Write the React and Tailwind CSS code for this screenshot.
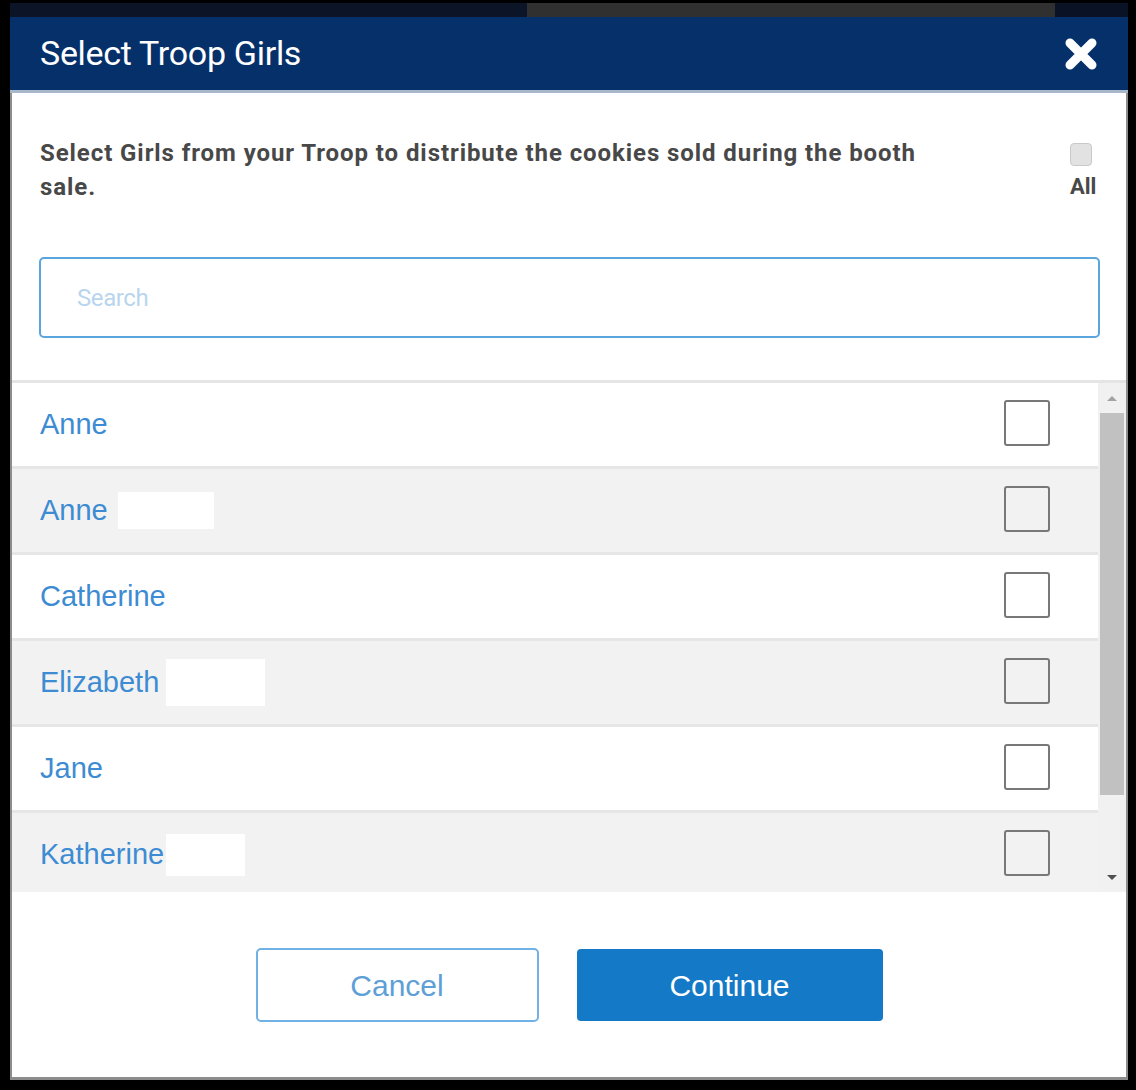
import React from 'react';

const girls = [
  { name: 'Anne' },
  { name: 'Anne', mask: 'ml-[10px] w-[96px] h-[37px]' },
  { name: 'Catherine' },
  { name: 'Elizabeth', mask: 'ml-[7px] w-[99px] h-[47px]' },
  { name: 'Jane' },
  { name: 'Katherine', mask: 'ml-[2px] w-[79px] h-[42px]' },
];

const CloseIcon = () => (
  <svg width="34" height="34" viewBox="0 0 34 34">
    <path d="M6 6 L28 28 M28 6 L6 28" stroke="#fff" strokeWidth="9" strokeLinecap="round" />
  </svg>
);

const App = () => {
  return (
    <div className="w-[1136px] h-[1090px] bg-black flex flex-col pt-[3px] pl-[10px] pr-[8px] pb-[10px]">
      {/* page behind the modal, mostly covered */}
      <div className="h-[14px] flex">
        <div className="w-[517px] bg-[#0b1527]" />
        <div className="w-[528px] bg-[#303030]" />
        <div className="flex-1 bg-[#0a1326]" />
      </div>

      {/* header */}
      <div className="h-[76px] bg-[#06306a] border-b-[3px] border-[#a8b7ca] flex items-center justify-between pl-[30px] pr-[30px]">
        <h1 className="text-white text-[34px] font-['Roboto',sans-serif] tracking-[-0.3px]">Select Troop Girls</h1>
        <button className="flex items-center">
          <CloseIcon />
        </button>
      </div>

      {/* body */}
      <div className="flex-1 bg-white border-l-2 border-r-2 border-b-[3px] border-[#8c8c8c] flex flex-col">
        <div className="flex justify-between pt-[43px] px-[28px]">
          <p className="text-[24px] leading-[34px] font-bold text-[#484848] font-['Roboto',sans-serif] tracking-[0.92px]">
            Select Girls from your Troop to distribute the cookies sold during the booth
            <br />
            sale.
          </p>
          <div className="w-[28px] flex flex-col items-start">
            <div className="mt-[7px] w-[22px] h-[23px] rounded-[4px] bg-[#e2e2e2] border border-[#c9c9c9]" />
            <span className="mt-[7px] text-[22px] leading-[28px] font-bold text-[#484848] font-['Roboto',sans-serif]">All</span>
          </div>
        </div>

        <div className="mt-[53px] ml-[27px] mr-[26px] h-[81px] border-2 border-[#5aa5de] rounded-[5px] flex items-center pl-[36px]">
          <input
            className="w-full outline-none text-[24px] font-['Roboto',sans-serif] placeholder:text-[#b9d5ee] tracking-[-0.4px]"
            placeholder="Search"
          />
        </div>

        <div className="mt-[42px] h-[512px] border-t-[3px] border-[#e5e5e5] flex">
          <div className="flex-1 overflow-hidden">
            {girls.map((g, i) => (
              <div
                key={i}
                className={`h-[86px] border-b-[3px] border-[#e6e6e6] flex items-center justify-between pl-[28px] pr-[48px] ${
                  i % 2 === 1 ? 'bg-[#f2f2f2]' : 'bg-white'
                }`}
              >
                <div className="flex items-center">
                  <span className="text-[29px] text-[#3d8cd3] font-['Liberation_Sans',Arial,sans-serif]">{g.name}</span>
                  {g.mask && <span className={`bg-white ${g.mask}`} />}
                </div>
                <div className="w-[46px] h-[46px] mb-[4px] border-2 border-[#787878] rounded-[3px]" />
              </div>
            ))}
          </div>
          <div className="w-[28px] h-[509px] bg-[#f1f1f1] flex flex-col items-center">
            <div className="h-[30px] flex items-center justify-center">
              <div className="w-0 h-0 border-l-[5px] border-r-[5px] border-b-[5px] border-l-transparent border-r-transparent border-b-[#a3a3a3]" />
            </div>
            <div className="w-[24px] h-[382px] bg-[#c1c1c1]" />
            <div className="flex-1" />
            <div className="h-[30px] flex items-center justify-center">
              <div className="w-0 h-0 border-l-[5px] border-r-[5px] border-t-[5px] border-l-transparent border-r-transparent border-t-[#505050]" />
            </div>
          </div>
        </div>

        <div className="mt-[56px] flex justify-center items-center gap-[38px]">
          <button className="w-[283px] h-[74px] border-2 border-[#72b1e3] rounded-[5px] bg-white text-[30px] text-[#5d9fd6] font-['Liberation_Sans',Arial,sans-serif]">
            Cancel
          </button>
          <button className="w-[306px] h-[72px] rounded-[4px] bg-[#1479c6] text-[30px] text-white font-['Liberation_Sans',Arial,sans-serif]">
            Continue
          </button>
        </div>
      </div>
    </div>
  );
};

export default App;
